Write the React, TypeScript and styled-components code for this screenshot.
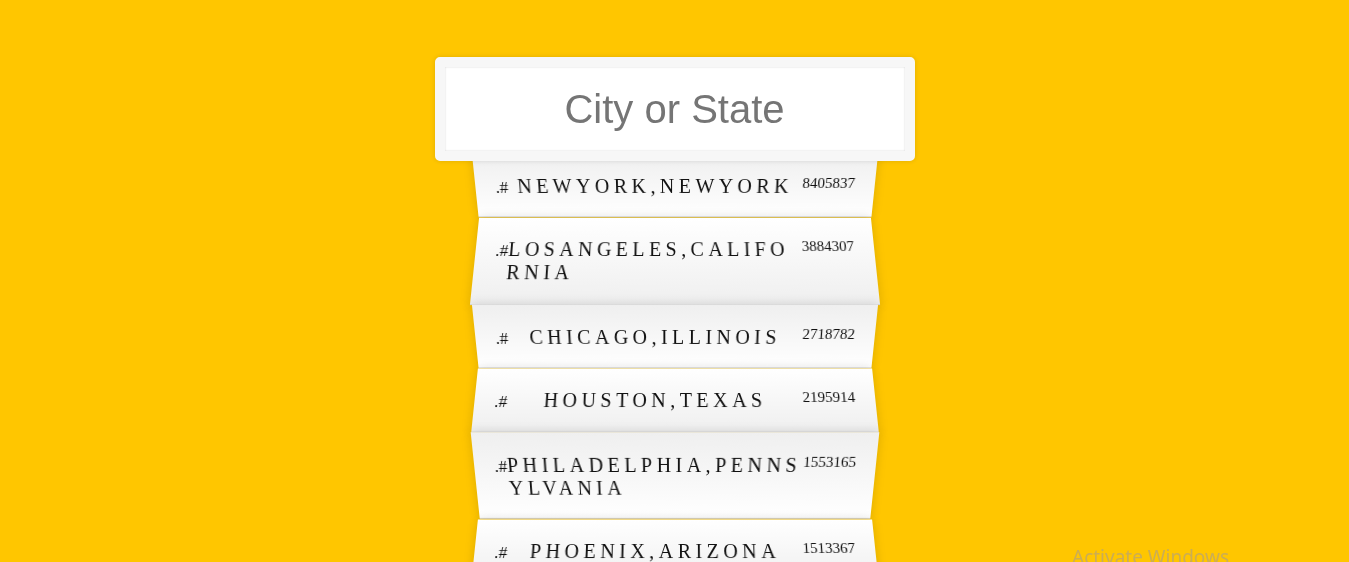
import React from "react";
import styled, { createGlobalStyle, css } from "styled-components";

const Global = createGlobalStyle`
  html {
    box-sizing: border-box;
    background: #ffc600;
    font-family: "Liberation Serif", "Times New Roman", serif;
    font-size: 20px;
  }
  *, *::before, *::after { box-sizing: inherit; }
  body { margin: 0; overflow: hidden; }
`;

const Page = styled.div`
  padding-top: 57px;
`;

const SearchForm = styled.form`
  max-width: 400px;
  margin: 0 auto;
`;

const SearchInput = styled.input`
  display: block;
  position: relative;
  z-index: 2;
  width: 480px;
  height: 104px;
  margin: 0 0 -10px -40px;
  padding: 20px;
  text-align: center;
  outline: 0;
  border: 10px solid #f7f7f7;
  border-radius: 5px;
  background: #fff;
  font-family: "Liberation Sans", Arial, sans-serif;
  font-size: 40px;
  color: #333;
  caret-color: #000;
  box-shadow: 0 0 5px rgba(0, 0, 0, 0.12), inset 0 0 2px rgba(0, 0, 0, 0.19);
  &::placeholder { color: #757575; }
`;

const Suggestions = styled.ul`
  margin: 0;
  padding: 0;
  position: relative;
`;

const Item = styled.li<{ $even: boolean }>`
  list-style: none;
  margin: 0;
  padding: 21px 20px 19px;
  display: flex;
  justify-content: space-between;
  align-items: flex-start;
  border-bottom: 1px solid #d8d8d8;
  box-shadow: 0 0 10px rgba(0, 0, 0, 0.14);
  color: #111;
  line-height: 23px;
  ${(p) =>
    p.$even
      ? css`
          transform: perspective(100px) rotateX(3deg) translateY(2px) scale(1.001);
          background: linear-gradient(to bottom, #ffffff 0%, #efefef 100%);
        `
      : css`
          transform: perspective(100px) rotateX(-3deg) translateY(3px);
          background: linear-gradient(to top, #ffffff 0%, #efefef 100%);
        `}
`;

const Hash = styled.span`
  flex: none;
  font-size: 17px;
  line-height: 21px;
  padding-top: 2px;
`;

const Name = styled.span`
  text-transform: uppercase;
  letter-spacing: 4.45px;
  word-break: break-all;
  min-width: 0;
`;

const Population = styled.span`
  flex: none;
  font-size: 15px;
  line-height: 17px;
`;

const Watermark = styled.div`
  position: fixed;
  left: 1072px;
  top: 544px;
  font-family: "Noto Sans", "Open Sans", sans-serif;
  font-size: 19px;
  color: #cbad55;
  pointer-events: none;
  white-space: nowrap;
`;

const cities = [
  { name: "NewYork,NewYork", pop: "8405837" },
  { name: "LosAngeles,California", pop: "3884307" },
  { name: "Chicago,Illinois", pop: "2718782" },
  { name: "Houston,Texas", pop: "2195914" },
  { name: "Philadelphia,Pennsylvania", pop: "1553165" },
  { name: "Phoenix,Arizona", pop: "1513367" },
  { name: "SanAntonio,Texas", pop: "1409019" },
  { name: "SanDiego,California", pop: "1355896" },
];

export default function App() {
  return (
    <>
      <Global />
      <Page>
        <SearchForm onSubmit={(e) => e.preventDefault()}>
          <SearchInput type="text" placeholder="City or State" autoFocus />
          <Suggestions>
            {cities.map((c, i) => (
              <Item key={c.name} $even={i % 2 === 1}>
                <Hash>.#</Hash>
                <Name>{c.name}</Name>
                <Population>{c.pop}</Population>
              </Item>
            ))}
          </Suggestions>
        </SearchForm>
      </Page>
      <Watermark>Activate Windows</Watermark>
    </>
  );
}
